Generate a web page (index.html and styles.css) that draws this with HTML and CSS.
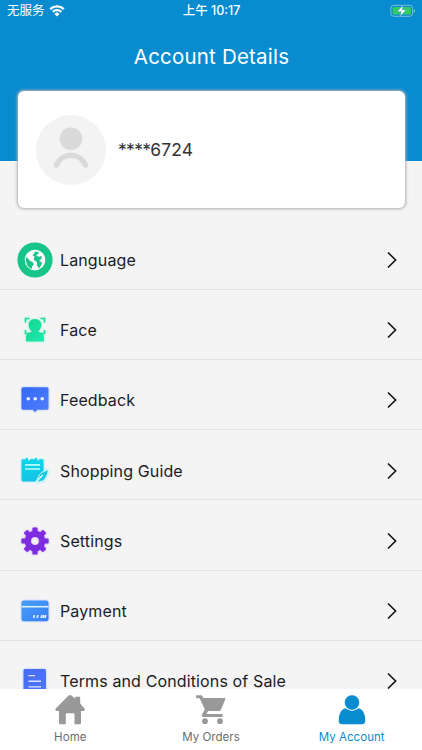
FILE: index.html
```
<!DOCTYPE html>
<html lang="en">
<head>
<meta charset="utf-8">
<meta name="viewport" content="width=device-width, initial-scale=1">
<title>Account Details</title>
<link rel="stylesheet" href="styles.css">
</head>
<body>
<div class="app">
  <header class="header">
    <div class="status">
      <div class="status-left">
        <span class="carrier">无服务</span>
        <svg class="wifi" width="16" height="12" viewBox="0 0 16 12" fill="none" stroke="#fff" stroke-width="2.2"><path d="M1.2 4.1a9.8 9.8 0 0 1 13.6 0M3.7 6.900a6.200 6.200 0 0 1 8.600 0"/><path d="M5.500 8.900a3.500 3.500 0 0 1 5 0L8 11.500z" fill="#fff" stroke="none"/></svg>
      </div>
      <span class="time">上午 10:17</span>
      <svg class="battery" width="26" height="14" viewBox="0 0 26 14"><rect x=".9" y="1.3" width="21.7" height="11" rx="3" fill="none" stroke="#7cbfe4"/><rect x="2.6" y="3" width="18.3" height="7.6" rx="1.6" fill="#35cb60"/><path d="M23.8 5v3.8q1.3-.5 1.3-1.9T23.8 5z" fill="#7cbfe4"/><path d="M13.2 1 7 7.7h4.1L9.9 12.6l6.4-6.8h-4.1z" fill="#fff" stroke="#168fc4" stroke-width=".5"/></svg>
    </div>
    <h1 class="title">Account Details</h1>
  </header>

  <section class="profile">
    <svg class="avatar" width="70" height="70" viewBox="0 0 70 70"><circle cx="35" cy="35" r="35" fill="#f3f3f3"/><circle cx="35" cy="23.8" r="11.3" fill="#dadada"/><path d="M20.5 50a15.700 15.700 0 0 1 29 0" fill="none" stroke="#dadada" stroke-width="5.500" stroke-linecap="round"/></svg>
    <span class="phone"><span class="masked">****</span>6724</span>
  </section>

  <main class="menu">
    <div class="row">
      <svg class="icon" viewBox="0 0 36 36"><circle cx="18" cy="18" r="17.6" fill="#18c588"/><circle cx="18" cy="18" r="9.600" fill="#fff" stroke="#fff" stroke-width="1.400"/><path d="M9.300 14.500 12.600 18.600l3.200 1.600 1 2.200-1.800 2-.2 2.600Q9 24.500 9 18zM17.800 9.500l3.700.6-.3 2-2.200 1.100 2.600 1.500 3.400-.8-.7 3-2.200 1.600 2.800 2-.4 2.600-2.500 3.300-2.300-3.600.5-2.400-3.400-2.700.7-3.200-2.100-1.300 1.600-1.300z" fill="#18c588"/></svg>
      <span class="label">Language</span>
      <svg class="chevron" viewBox="0 0 12 18"><path d="m2 1.500 7.600 7.500L2 16.500"/></svg>
    </div>
    <div class="row">
      <svg class="icon glow-green" viewBox="0 0 36 36"><defs><linearGradient id="face" x1="0" y1="0" x2="1" y2="1"><stop stop-color="#12d58c"/><stop offset="1" stop-color="#20eab0"/></linearGradient></defs><path d="M8.500 10.500V6.500h4M23.500 6.500h4v4M8.500 18v3.500h3M27.500 18v3.500h-3" fill="none" stroke="#20dca0" stroke-width="1.600"/><path d="M18 7c-4.300 0-6.700 3-6.300 6.700.2 2.300 1.300 4 2.700 5.200v1.200c-3.800.7-5.400 2.400-5.400 5.800v2.800q0 .9.900.9h16.200q.9 0 .9-.9v-2.800c0-3.400-1.600-5.100-5.400-5.800v-1.200c1.400-1.200 2.500-2.900 2.700-5.200C24.700 10 22.300 7 18 7z" fill="url(#face)"/></svg>
      <span class="label">Face</span>
      <svg class="chevron" viewBox="0 0 12 18"><path d="m2 1.500 7.600 7.500L2 16.500"/></svg>
    </div>
    <div class="row">
      <svg class="icon glow-blue" viewBox="0 0 36 36"><defs><linearGradient id="chat" x1="0" y1="0" x2="1" y2="1"><stop stop-color="#3269f8"/><stop offset="1" stop-color="#527dfa"/></linearGradient></defs><path d="M6 5.200h24q1.500 0 1.500 1.500v19.600q0 1.500-1.500 1.500h-9.700L18 30.300l-2.300-2.500H6q-1.500 0-1.500-1.500V6.700Q4.500 5.200 6 5.200z" fill="url(#chat)"/><g fill="#e5efff"><circle cx="11.300" cy="16.700" r="1.800"/><circle cx="18.200" cy="16.700" r="1.800"/><circle cx="25.200" cy="16.700" r="1.800"/></g></svg>
      <span class="label">Feedback</span>
      <svg class="chevron" viewBox="0 0 12 18"><path d="m2 1.500 7.600 7.500L2 16.500"/></svg>
    </div>
    <div class="row">
      <svg class="icon glow-cyan" viewBox="0 0 36 36"><defs><linearGradient id="note" x1="0" y1="0" x2="0" y2="1"><stop stop-color="#0bd6e9"/><stop offset="1" stop-color="#17c3e4"/></linearGradient></defs><path d="M5.800 6.300H9V5h2v2.600h2V6.300h5V5h2v2.600h2V6.300h3.500q1 0 1 1V28.500H6.200q-1.700 0-1.700-1.700V7.300q0-1 1.300-1z" fill="url(#note)"/><path d="M8 11.900h15M8 16h15" stroke="#b8fbff" stroke-width="1.600"/><path d="M31.500 16.800c-5.500 1.300-9.300 3.800-9.700 6.600l-3.300 6.500 7.800-2.200c2.500-1.900 4.500-5.900 5.200-10.900z" fill="#13cbe2" stroke="#e9fcff" stroke-width="1"/><path d="m18.700 29.700 7-7.700" stroke="#e9fcff" stroke-width="1.200"/></svg>
      <span class="label">Shopping Guide</span>
      <svg class="chevron" viewBox="0 0 12 18"><path d="m2 1.500 7.600 7.500L2 16.500"/></svg>
    </div>
    <div class="row">
      <svg class="icon glow-purple" viewBox="0 0 36 36"><defs><mask id="hub"><path d="M0 0h36v36H0z" fill="#fff"/><circle cx="18" cy="18" r="4" fill="#000"/></mask></defs><g fill="#7d2ce0" mask="url(#hub)"><circle cx="18" cy="18" r="10.300"/><rect id="cog" x="15.400" y="4.400" width="5.200" height="27.200" rx="1.200"/><use href="#cog" transform="rotate(45 18 18)"/><use href="#cog" transform="rotate(90 18 18)"/><use href="#cog" transform="rotate(135 18 18)"/></g></svg>
      <span class="label">Settings</span>
      <svg class="chevron" viewBox="0 0 12 18"><path d="m2 1.500 7.600 7.500L2 16.500"/></svg>
    </div>
    <div class="row">
      <svg class="icon glow-blue" viewBox="0 0 36 36"><defs><linearGradient id="card" x1="0" y1="0" x2="1" y2="1"><stop stop-color="#469ffa"/><stop offset="1" stop-color="#377df7"/></linearGradient></defs><rect x="4.500" y="7.500" width="27" height="20.700" rx="2.500" fill="url(#card)"/><path d="M4.500 13.700h27" stroke="#d9f0ff" stroke-width="1.600"/><path d="m16.500 25 1.100-3M20 25l1.100-3M24 25l1-3M26 25l1-3M28 25l.8-3" stroke="#e4f3ff" stroke-width="1.600"/></svg>
      <span class="label">Payment</span>
      <svg class="chevron" viewBox="0 0 12 18"><path d="m2 1.500 7.600 7.500L2 16.500"/></svg>
    </div>
    <div class="row">
      <svg class="icon glow-blue" viewBox="0 0 36 36"><defs><linearGradient id="doc" x1="0" y1="0" x2="1" y2="1"><stop stop-color="#446af5"/><stop offset="1" stop-color="#5178fa"/></linearGradient></defs><rect x="6.500" y="6" width="22.500" height="26" rx="1.500" fill="url(#doc)"/><path d="M11.500 12.600h6.500M11.500 18.200H24M11.500 23.900H24" stroke="#dce6ff" stroke-width="1.400"/></svg>
      <span class="label">Terms and Conditions of Sale</span>
      <svg class="chevron" viewBox="0 0 12 18"><path d="m2 1.500 7.600 7.500L2 16.500"/></svg>
    </div>
  </main>

  <nav class="tabs">
    <div class="tab">
      <svg class="tab-icon" viewBox="0 0 30 30"><path d="M13.600.5q1.400-1 2.800 0l3.800 3.300V2.400q0-.7.700-.7h3.600q.7 0 .7.700v6.200l4.200 4.800q1.200 2.200-.7 2.500H26v12q0 1.300-1.300 1.300h-5.200V19.200q0-1-1-1h-6.700q-1 0-1 1v10.100H5.400Q4 29.300 4 28V16H1.600q-2-.3-.9-2.600z"/></svg>
      <span>Home</span>
    </div>
    <div class="tab">
      <svg class="tab-icon" viewBox="0 0 30 30"><path d="M.7.300h4.600q.8 0 1.100.8l.8 2h21.500q1 0 .7 1l-4.600 11q-.4 1-1.600 1H12.100L10.500 19h16.100v2.900H7.200Q5 21.700 5.900 19.700l2.900-5.100L3.700 3.200H.7q-.6 0-.6-.7V1Q.1.300.7.300z"/><circle cx="9" cy="26.200" r="2.900"/><circle cx="24" cy="26.200" r="2.900"/></svg>
      <span>My Orders</span>
    </div>
    <div class="tab active">
      <svg class="tab-icon" viewBox="0 0 30 30"><path d="M8.200 13.200q6.800 4.800 13.600 0 6.500 2 6.500 12.400 0 3.600-3 3.600H4.700q-3 0-3-3.600Q1.700 15.200 8.200 13.200z"/><circle cx="15" cy="7.500" r="7.700" stroke="#fff" stroke-width=".8"/></svg>
      <span>My Account</span>
    </div>
  </nav>
</div>
</body>
</html>
```
FILE: styles.css
```
* { box-sizing: border-box; }

body {
  margin: 0;
  font-family: Inter, "Noto Sans CJK SC", sans-serif;
  background: #f4f4f4;
}

.app {
  display: flex;
  flex-direction: column;
  width: 422px;
  height: 750px;
  overflow: hidden;
}

.header {
  flex: none;
  height: 161px;
  background: #098bd0;
  color: #fff;
}

.status {
  display: grid;
  grid-template-columns: 1fr auto 1fr;
  align-items: center;
  height: 22px;
  padding: 0 6px 0 7px;
  font-size: 12.5px;
  line-height: 22px;
}

.status-left {
  display: flex;
  align-items: center;
  gap: 4px;
}

.time {
  font-weight: 500;
}

.battery { justify-self: end; }

.title {
  margin: 21px 0 0;
  padding-left: 1px;
  font-size: 20.5px;
  font-weight: 400;
  line-height: 28px;
  letter-spacing: 0.2px;
  text-align: center;
}

.profile {
  position: relative;
  display: flex;
  flex: none;
  align-items: center;
  gap: 12px;
  height: 117px;
  margin: -70px 17px 0 18px;
  padding-left: 18px;
  border-radius: 6px;
  background: #fff;
  box-shadow: 0 0 3px 0.5px #b0b0b0;
}

.phone {
  color: #333;
  font-size: 17.5px;
  letter-spacing: 0.1px;
}

.masked { letter-spacing: -0.7px; }

.menu {
  flex: 1;
  min-height: 0;
  padding-top: 11.4px;
  overflow: hidden;
}

.row {
  display: flex;
  align-items: center;
  height: 70.27px;
  padding: 11.5px 24px 0 17px;
  border-bottom: 1px solid #e1e1e1;
}

.icon {
  flex: none;
  width: 36px;
  height: 36px;
  margin-right: 7px;
}

.glow-green { filter: drop-shadow(0 0 1px #8df0ce); }
.glow-blue { filter: drop-shadow(0 0 1px #a9c6ff); }
.glow-cyan { filter: drop-shadow(0 0 1px #83eef5); }
.glow-purple { filter: drop-shadow(0 0 1px #c6a0f3); }

.label {
  flex: 1;
  color: #1c1c26;
  font-size: 16px;
  letter-spacing: 0.13px;
  white-space: nowrap;
}

.chevron {
  flex: none;
  width: 12px;
  height: 18px;
  fill: none;
  stroke: #111;
  stroke-width: 1.6;
}

.tabs {
  display: grid;
  flex: none;
  grid-template-columns: repeat(3, 1fr);
  height: 61px;
  background: #fff;
}

.tab {
  display: flex;
  flex-direction: column;
  align-items: center;
  padding-top: 6px;
  color: #6c6c6c;
  font-size: 11.5px;
  line-height: 14px;
  letter-spacing: 0.05px;
  gap: 5px;
}

.tab-icon {
  width: 30px;
  height: 30px;
  fill: #999;
}

.active { color: #098bd0; }
.active .tab-icon { fill: #098bd0; }
```
